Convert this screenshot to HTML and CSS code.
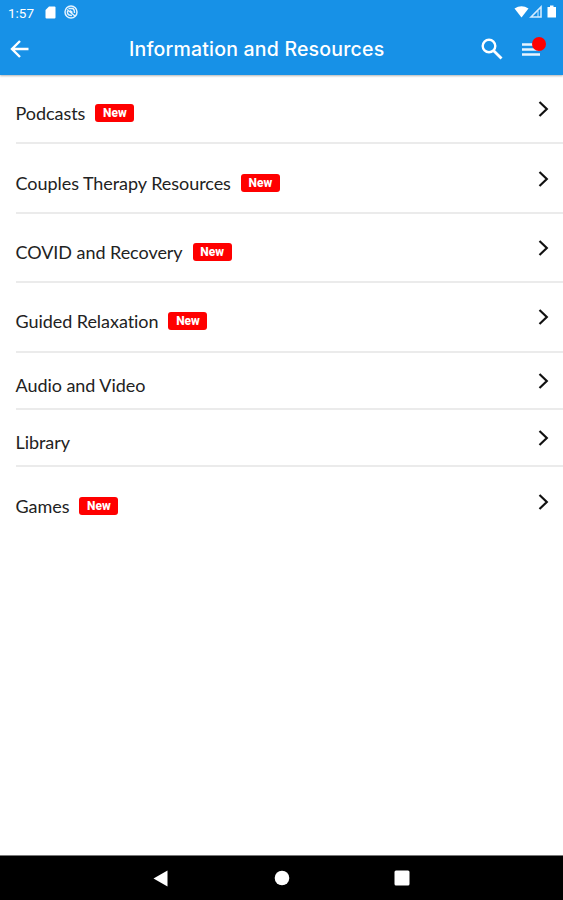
FILE: index.html
```html
<!DOCTYPE html>
<html lang="en">
<head>
    <meta charset="UTF-8">
    <meta name="viewport" content="width=device-width, initial-scale=1.0">
    <title>Information and Resources</title>
    <link rel="stylesheet" href="styles.css">
</head>
<body>
    <header class="header">
        <div class="status-bar">
            <span class="time">1:57</span>
            <svg class="sd-icon" width="11" height="13" viewBox="0 0 11 13"><path d="M4 0.5H9.5Q10.5 0.5 10.5 1.5V11.5Q10.5 12.5 9.5 12.5H1.5Q0.5 12.5 0.5 11.5V4Z" fill="#fff"/></svg>
            <svg class="sync-icon" width="14" height="14" viewBox="0 0 14 14" fill="none" stroke="#e4f3ff"><circle cx="7" cy="7" r="6" stroke-width="1.5"/><path d="M3 4.5L11 11M4.5 3.5H8.5Q10.5 4 10.5 8M3.5 6V8Q4 10.5 8 10.5M6 5.5L8.5 7.5" stroke-width="1.4"/></svg>
            <svg class="signal-icons" width="43" height="14" viewBox="0 0 43 14"><path d="M0.5 3.5Q7.5 -1 14.5 3.5L7.5 12.5Z" fill="#fff"/><path d="M17 12L27 2V12Z" fill="none" stroke="#d5ecff" stroke-width="1.6"/><path d="M24 6V12" stroke="#d5ecff"/><path d="M36 0.5H39.5V2H42V12.5H33.5V2H36Z" fill="#fff"/></svg>
        </div>
        <div class="toolbar">
            <svg class="back" width="19" height="18" viewBox="0 0 19 18" fill="none" stroke="#fff" stroke-width="2.4"><path d="M18.5 9H2.5M10 1L2 9L10 17"/></svg>
            <h1>Information and Resources</h1>
            <svg class="search" width="22" height="22" viewBox="0 0 22 22" fill="none" stroke="#fff"><circle cx="8" cy="8" r="6.3" stroke-width="2.4"/><path d="M12.7 12.7L20.5 20.5" stroke-width="2.8"/></svg>
            <div class="menu">
                <svg width="18" height="13" viewBox="0 0 18 13" stroke="#e8f4ff" stroke-width="2.4"><path d="M0 1.5H18M0 6.5H18M0 11.5H18"/></svg>
                <span class="dot"></span>
            </div>
        </div>
    </header>

    <ul class="list">
        <li class="item tall">
            <span class="label">Podcasts</span><span class="badge">New</span>
            <svg class="chevron" width="11" height="16" viewBox="0 0 11 16"><path d="M1.5 1L8.8 8L1.5 15"/></svg>
        </li>
        <li class="item tall">
            <span class="label">Couples Therapy Resources</span><span class="badge">New</span>
            <svg class="chevron" width="11" height="16" viewBox="0 0 11 16"><path d="M1.5 1L8.8 8L1.5 15"/></svg>
        </li>
        <li class="item tall">
            <span class="label">COVID and Recovery</span><span class="badge">New</span>
            <svg class="chevron" width="11" height="16" viewBox="0 0 11 16"><path d="M1.5 1L8.8 8L1.5 15"/></svg>
        </li>
        <li class="item tall">
            <span class="label">Guided Relaxation</span><span class="badge">New</span>
            <svg class="chevron" width="11" height="16" viewBox="0 0 11 16"><path d="M1.5 1L8.8 8L1.5 15"/></svg>
        </li>
        <li class="item">
            <span class="label">Audio and Video</span>
            <svg class="chevron" width="11" height="16" viewBox="0 0 11 16"><path d="M1.5 1L8.8 8L1.5 15"/></svg>
        </li>
        <li class="item">
            <span class="label">Library</span>
            <svg class="chevron" width="11" height="16" viewBox="0 0 11 16"><path d="M1.5 1L8.8 8L1.5 15"/></svg>
        </li>
        <li class="item tall">
            <span class="label">Games</span><span class="badge">New</span>
            <svg class="chevron" width="11" height="16" viewBox="0 0 11 16"><path d="M1.5 1L8.8 8L1.5 15"/></svg>
        </li>
    </ul>

    <nav class="nav-bar">
        <svg width="16" height="17" viewBox="0 0 16 17"><path d="M0.5 8.5L14.5 0.5V16.5Z" fill="#fff"/></svg>
        <svg width="16" height="16" viewBox="0 0 16 16"><circle cx="8" cy="8" r="7.3" fill="#fff"/></svg>
        <svg width="16" height="16" viewBox="0 0 16 16"><rect x="0.5" y="0.5" width="15" height="15" rx="1.5" fill="#fff"/></svg>
    </nav>
</body>
</html>
```
FILE: styles.css
```css
* {
    box-sizing: border-box;
}
body {
    margin: 0;
    height: 900px;
    display: flex;
    flex-direction: column;
    background: #fff;
    font-family: Lato, sans-serif;
    overflow: hidden;
}
svg {
    display: block;
    flex: none;
}
.header {
    height: 75px;
    background: #1791e7;
    color: #fff;
    box-shadow: 0 1px 2px rgba(0, 0, 0, 0.3);
}
.status-bar {
    height: 24px;
    display: flex;
    align-items: center;
    padding: 0 6px 0 8px;
}
.time {
    width: 37px;
    font-family: Roboto, sans-serif;
    font-size: 13.5px;
    line-height: 24px;
    padding-top: 1px;
}
.sync-icon {
    margin-left: 8px;
}
.signal-icons {
    margin-left: auto;
}
.toolbar {
    height: 50px;
    display: flex;
    align-items: center;
    padding: 0 18px 0 10px;
}
h1 {
    width: 262px;
    margin: 0 auto 0 100px;
    font-family: Inter, sans-serif;
    font-size: 19.5px;
    font-weight: 500;
    letter-spacing: 0.2px;
    white-space: nowrap;
}
.search {
    margin-right: 19px;
}
.menu {
    position: relative;
    width: 23px;
}
.dot {
    position: absolute;
    top: -6px;
    left: 10px;
    width: 14px;
    height: 14px;
    border-radius: 50%;
    background: #f00;
}
.list {
    flex: 1;
    margin: 0;
    padding: 0 0 0 15.5px;
    list-style: none;
}
.item {
    height: 57.3px;
    display: flex;
    align-items: center;
    padding-right: 14px;
    border-bottom: 2px solid #ebebeb;
}
.item.tall {
    height: 69.4px;
}
.item:last-child {
    border-bottom: none;
}
.label {
    font-size: 18px;
    line-height: 24px;
    letter-spacing: -0.05px;
    font-variant-ligatures: none;
    margin-top: 9px;
    color: #222;
    white-space: nowrap;
}
.badge {
    width: 39px;
    height: 18px;
    margin: 9px 0 0 10px;
    border-radius: 3px;
    background: #f00;
    color: #fff;
    font: 800 12px/18px Roboto, sans-serif;
    text-align: center;
}
.chevron {
    margin-top: 1px;
    margin-left: auto;
    fill: none;
    stroke: #111;
    stroke-width: 2.2;
}
.nav-bar {
    height: 45px;
    display: flex;
    align-items: center;
    justify-content: space-between;
    padding: 0 153px;
    background: #000;
    border-top: 1px solid #777;
}
```
